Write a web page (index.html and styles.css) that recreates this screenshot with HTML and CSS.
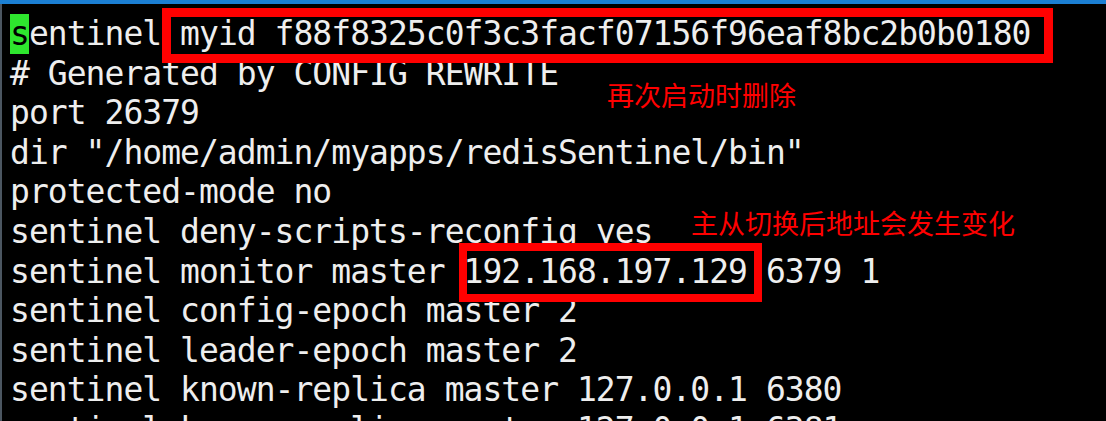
FILE: index.html
```html
<!DOCTYPE html>
<html lang="en">
<head>
    <meta charset="UTF-8">
    <meta name="viewport" content="width=device-width, initial-scale=1.0">
    <title>sentinel.conf</title>
    <link rel="stylesheet" href="styles.css">
</head>
<body>
    <div class="screen">
        <div class="titlebar"></div>
        <div class="terminal">
<pre class="lines"><span class="cursor">s</span>entinel myid f88f8325c0f3c3facf07156f96eaf8bc2b0b0180
# Generated by CONFIG REWRITE
port 26379
dir "/home/admin/myapps/redisSentinel/bin"
protected-mode no
sentinel deny-scripts-reconfig yes
sentinel monitor master 192.168.197.129 6379 1
sentinel config-epoch master 2
sentinel leader-epoch master 2
sentinel known-replica master 127.0.0.1 6380
sentinel known-replica master 127.0.0.1 6381</pre>
        </div>

        <div class="mark mark-id"></div>
        <div class="mark mark-ip"></div>
        <div class="note note-id">再次启动时删除</div>
        <div class="note note-ip">主从切换后地址会发生变化</div>
    </div>
</body>
</html>
```

FILE: styles.css
```css
body {
    margin: 0;
    background: #000;
    overflow: hidden;
}

.screen {
    position: relative;
    width: 1106px;
    height: 421px;
    overflow: hidden;
}

.titlebar {
    height: 4px;
    background: #1b7fd3;
}

.terminal {
    border-left: 2px solid #4b5661;
    padding: 10px 0 0 8px;
    height: 417px;
    box-sizing: border-box;
}

.lines {
    margin: 0;
    font-family: "DejaVu Sans Mono", monospace;
    font-size: 33px;
    letter-spacing: -0.97px;
    line-height: 39.6px;
    color: #eeeeee;
}

.cursor {
    display: inline-block;
    background: #2ee62e;
    color: #000;
}

/* annotations drawn over the screenshot */
.mark {
    position: absolute;
    border: 9px solid #ff0000;
    box-sizing: border-box;
}

.mark-id {
    left: 162px;
    top: 8px;
    width: 891px;
    height: 55px;
}

.mark-ip {
    left: 459px;
    top: 243px;
    width: 303px;
    height: 59px;
    border-width: 8px;
}

.note {
    position: absolute;
    font-family: "Noto Sans CJK SC", sans-serif;
    font-size: 27px;
    line-height: 1;
    color: #ff0000;
}

.note-id {
    left: 607px;
    top: 81px;
}

.note-ip {
    left: 691px;
    top: 209px;
}
```
